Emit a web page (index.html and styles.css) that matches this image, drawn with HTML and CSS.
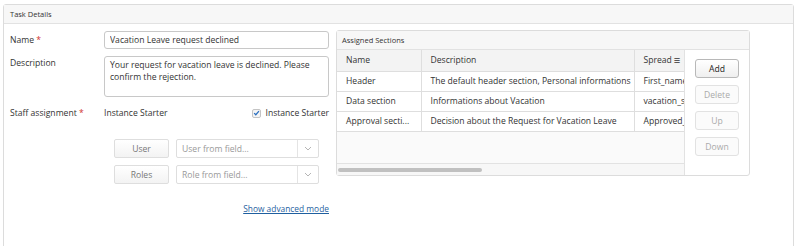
FILE: index.html
```html
<!DOCTYPE html>
<html lang="en">
<head>
  <meta charset="UTF-8">
  <title>Task Details</title>
  <link rel="stylesheet" href="styles.css">
</head>
<body>
  <div class="panel">
    <div class="panel-head">Task Details</div>
    <div class="panel-body">
      <!-- linke Spalte: Formular -->
      <div class="form">
        <div class="row row-name">
          <label class="lbl">Name <span class="req">*</span></label>
          <input class="field" type="text" value="Vacation Leave request declined">
        </div>
        <div class="row row-desc">
          <label class="lbl">Description</label>
          <textarea class="field area">Your request for vacation leave is declined. Please confirm the rejection.</textarea>
        </div>
        <div class="row row-staff">
          <label class="lbl">Staff assignment <span class="req">*</span></label>
          <div class="staff">
            <span>Instance Starter</span>
            <span class="check"><span class="box"><svg width="8" height="8" viewBox="0 0 8 8"><path d="M1.3 4.2 L3.2 6 L6.8 1.8" fill="none" stroke="#2a6fc0" stroke-width="1.4"/></svg></span>Instance Starter</span>
          </div>
        </div>
        <div class="pick first">
          <button class="btn-plain">User</button>
          <div class="select"><span>User from field...</span><span class="arrow"><svg width="8" height="5" viewBox="0 0 8 5"><path d="M1 1 L4 4 L7 1" fill="none" stroke="#b5b5b5" stroke-width="1"/></svg></span></div>
        </div>
        <div class="pick">
          <button class="btn-plain">Roles</button>
          <div class="select"><span>Role from field...</span><span class="arrow"><svg width="8" height="5" viewBox="0 0 8 5"><path d="M1 1 L4 4 L7 1" fill="none" stroke="#b5b5b5" stroke-width="1"/></svg></span></div>
        </div>
        <div class="adv"><a href="#">Show advanced mode</a></div>
      </div>

      <!-- rechte Spalte: zugewiesene Abschnitte -->
      <div class="sections">
        <div class="sections-head">Assigned Sections</div>
        <div class="sections-body">
          <div class="grid">
            <table>
              <thead>
                <tr><th class="c1">Name</th><th class="c2">Description</th><th class="c3"><div class="th-in"><span>Spread</span><span class="menu">&#8801;</span></div></th></tr>
              </thead>
              <tbody>
                <tr><td>Header</td><td>The default header section, Personal informations</td><td>First_name</td></tr>
                <tr><td>Data section</td><td>Informations about Vacation</td><td>vacation_start</td></tr>
                <tr><td>Approval secti...</td><td>Decision about the Request for Vacation Leave</td><td>Approved_</td></tr>
              </tbody>
            </table>
            <div class="scroll"><div class="thumb"></div></div>
          </div>
          <div class="actions">
            <button class="btn">Add</button>
            <button class="btn off">Delete</button>
            <button class="btn off">Up</button>
            <button class="btn off">Down</button>
          </div>
        </div>
      </div>
    </div>
  </div>
</body>
</html>
```

FILE: styles.css
```css
/* Grundlegendes Reset */
body, html {
  margin: 0;
  padding: 0;
  background: #fff;
  font-family: "Open Sans", Arial, sans-serif;
  font-size: 8.6px;
  color: #333;
  overflow: hidden;
}

/* äußerer Rahmen */
.panel {
  margin: 4px 6px 0 3px;
  height: 260px;
  border: 1px solid #dcdcdc;
  border-radius: 3px;
  box-sizing: border-box;
}

.panel-head {
  height: 18px;
  line-height: 18px;
  padding-left: 6px;
  font-size: 7.5px;
  background: #f7f7f7;
  border-bottom: 1px solid #e2e2e2;
}

.panel-body {
  display: flex;
  gap: 7px;
  padding: 7px 0 0 6px;
}

/* Formular links */
.form {
  width: 319px;
  display: flex;
  flex-direction: column;
}

.row {
  display: flex;
}

.lbl {
  width: 94px;
  flex: none;
}

.req {
  color: #d0312d;
}

.field {
  width: 225px;
  box-sizing: border-box;
  border: 1px solid #c8c8c8;
  border-radius: 3px;
  font: inherit;
  color: #333;
  padding: 0 5px;
  margin: 0;
}

.row-name .lbl {
  line-height: 18px;
}

.row-name .field {
  height: 18px;
}

.row-desc {
  margin-top: 7px;
}

.row-desc .lbl {
  padding-top: 1px;
}

.area {
  height: 41px;
  resize: none;
  padding: 2px 5px;
  line-height: 12px;
  overflow: hidden;
}

.row-staff {
  margin-top: 10px;
  line-height: 12px;
}

.staff {
  width: 225px;
  display: flex;
  justify-content: space-between;
}

.check {
  display: flex;
  align-items: center;
  gap: 4px;
}

.box {
  width: 9px;
  height: 9px;
  border: 1px solid #c4c4c4;
  border-radius: 2px;
  background: #f4f4f4;
  display: flex;
  align-items: center;
  justify-content: center;
  box-sizing: border-box;
}

.pick {
  display: flex;
  gap: 7px;
  margin-left: 104px;
  margin-top: 7px;
}

.pick.first {
  margin-top: 20px;
}

.btn-plain {
  width: 55px;
  height: 19px;
  border: 1px solid #dedede;
  border-radius: 2px;
  background: linear-gradient(#fff, #f3f3f3);
  font: inherit;
  color: #777;
  padding: 0;
}

.select {
  width: 143px;
  height: 19px;
  box-sizing: border-box;
  border: 1px solid #dedede;
  border-radius: 2px;
  display: flex;
  align-items: center;
  color: #999;
}

.select span:first-child {
  flex: 1;
  padding-left: 5px;
}

.arrow {
  width: 20px;
  height: 100%;
  border-left: 1px solid #e4e4e4;
  display: flex;
  align-items: center;
  justify-content: center;
}

.adv {
  margin-top: 19px;
  text-align: right;
  width: 319px;
}

.adv a {
  color: #1f5f9f;
  text-decoration: underline;
  font-size: 8.4px;
}

/* zugewiesene Abschnitte rechts */
.sections {
  width: 414px;
  height: 146px;
  margin-top: -1px;
  border: 1px solid #dcdcdc;
  border-radius: 3px;
  box-sizing: border-box;
  display: flex;
  flex-direction: column;
}

.sections-head {
  height: 18px;
  line-height: 18px;
  padding-left: 5px;
  font-size: 7.5px;
  background: #f7f7f7;
  border-bottom: 1px solid #e2e2e2;
}

.sections-body {
  flex: 1;
  display: flex;
}

.grid {
  width: 347px;
  display: flex;
  flex-direction: column;
  background: #fafafa;
  overflow: hidden;
}

table {
  border-collapse: collapse;
  table-layout: fixed;
  width: 400px;
  background: #fff;
}

th, td {
  height: 20px;
  padding: 0 0 0 9px;
  text-align: left;
  font-weight: normal;
  border: 1px solid #dedede;
  border-top: none;
  white-space: nowrap;
  overflow: hidden;
  box-sizing: border-box;
}

th {
  background: #f3f3f3;
  height: 21px;
}

th:first-child, td:first-child {
  border-left: none;
}

.c1 { width: 84px; }
.c2 { width: 213px; }
.c3 { width: 103px; }

.th-in {
  display: flex;
  align-items: center;
  height: 20px;
}

.menu {
  width: 15px;
  height: 20px;
  line-height: 20px;
  padding-left: 2px;
  font-size: 11px;
  box-sizing: border-box;
  border-right: 1px solid #dedede;
}

.scroll {
  margin-top: auto;
  height: 11px;
  border-top: 1px solid #e2e2e2;
  background: #f7f7f7;
  display: flex;
  align-items: center;
  padding-left: 1px;
}

.thumb {
  width: 144px;
  height: 4px;
  border-radius: 3px;
  background: #c0c0c0;
}

.actions {
  flex: 1;
  border-left: 1px solid #e2e2e2;
  display: flex;
  flex-direction: column;
  align-items: center;
  gap: 7px;
  padding-top: 9px;
}

.btn {
  width: 44px;
  height: 19px;
  border: 1px solid #b8b8b8;
  border-radius: 3px;
  background: linear-gradient(#fff, #efefef);
  font: inherit;
  color: #222;
  padding: 0;
}

.btn.off {
  border-color: #e2e2e2;
  background: #fbfbfb;
  color: #aaa;
}
```
